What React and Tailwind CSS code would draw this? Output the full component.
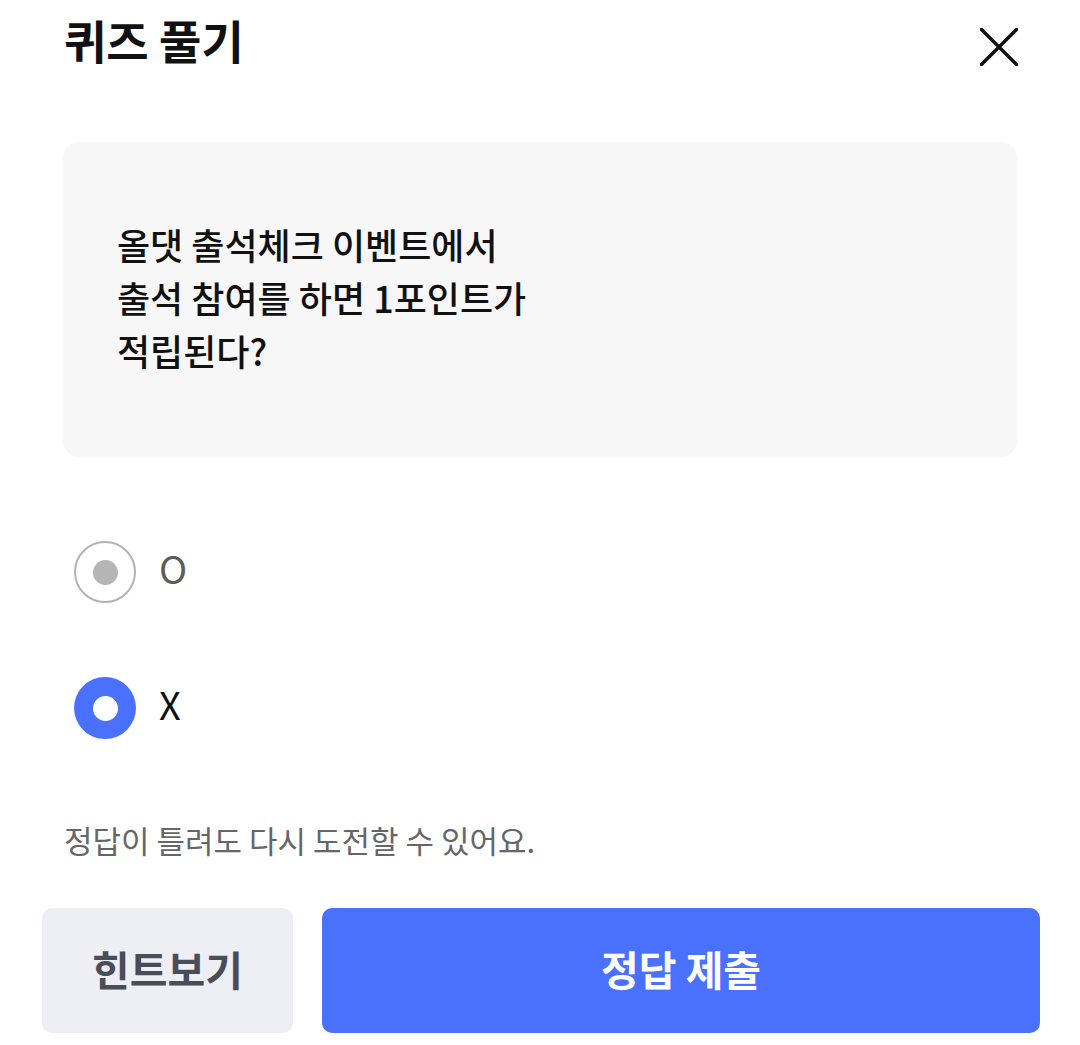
import React, { useState } from 'react';

const Radio = ({ checked }) =>
  checked ? (
    <div className="w-[62px] h-[62px] rounded-full bg-[#4a70ff] flex items-center justify-center">
      <div className="w-[25px] h-[25px] rounded-full bg-white" />
    </div>
  ) : (
    <div className="w-[62px] h-[62px] rounded-full border-2 border-[#b3b3b3] flex items-center justify-center">
      <div className="w-[25px] h-[25px] rounded-full bg-[#b5b5b5]" />
    </div>
  );

export default function App() {
  const [answer, setAnswer] = useState('X');

  return (
    <div className="w-[1080px] h-[1045px] bg-white flex flex-col font-['Noto_Sans_CJK_KR','Noto_Sans',sans-serif]">
      <div className="h-[86px] pl-[64px] pr-[62px] flex items-center justify-between">
        <h1 className="mb-2 text-[46px] font-bold leading-none text-[#111]">퀴즈 풀기</h1>
        <button className="mt-2" aria-label="닫기">
          <svg width="38" height="38" viewBox="0 0 38 38">
            <path d="M1 1L37 37M37 1L1 37" stroke="#111" strokeWidth="3.5" strokeLinecap="square" />
          </svg>
        </button>
      </div>

      <div className="mt-[56px] mx-[63px] h-[315px] rounded-2xl bg-[#f7f7f7] flex items-center pl-[54px]">
        <p className="-mt-1 text-[36px] font-medium leading-[53px] text-[#111]">
          올댓 출석체크 이벤트에서
          <br />
          출석 참여를 하면 1포인트가
          <br />
          적립된다?
        </p>
      </div>

      <div className="mt-[84px] pl-[74px] flex flex-col gap-[74px]">
        {['O', 'X'].map((opt) => (
          <div key={opt} className="flex items-center gap-[23px] cursor-pointer" onClick={() => setAnswer(opt)}>
            <Radio checked={answer === opt} />
            <span className={`-mt-2 text-[38px] font-normal leading-none ${answer === opt ? 'text-[#111]' : 'text-[#5c5c5c]'}`}>{opt}</span>
          </div>
        ))}
      </div>

      <p className="mt-[81px] pl-[64px] text-[31px] leading-[40px] text-[#666]">정답이 틀려도 다시 도전할 수 있어요.</p>

      <div className="mt-[48px] pl-[42px] pr-[40px] flex gap-[29px]">
        <button className="w-[251px] h-[125px] pb-1 rounded-[10px] bg-[#eeeff4] text-[41px] font-bold text-[#4a4c58]">힌트보기</button>
        <button className="flex-1 h-[125px] pb-1 rounded-[10px] bg-[#4a70fe] text-[41px] font-bold text-white">정답 제출</button>
      </div>
    </div>
  );
}
